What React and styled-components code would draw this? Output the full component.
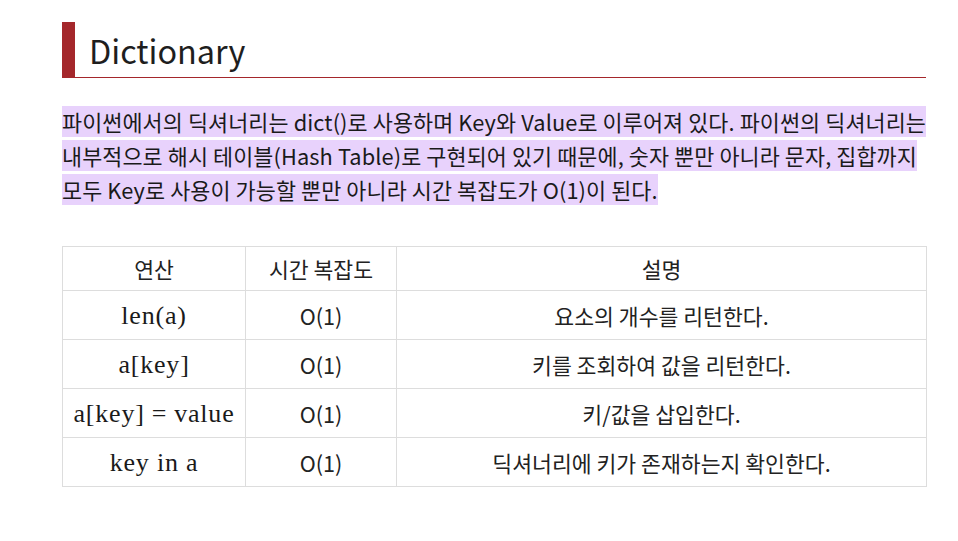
import React from 'react'
import styled, { createGlobalStyle } from 'styled-components'

const GlobalStyle = createGlobalStyle`
	body {
		margin: 0;
		background: #fff;
		font-family: "Noto Sans CJK KR", "Noto Sans", sans-serif;
		color: #222;
	}
`

const Page = styled.div`
	width: 864px;
	padding: 22px 32px 40px 62px;
`

const Header = styled.div`
	height: 55px;
	border-left: 13px solid #a4272b;
	border-bottom: 1px solid #a4272b;
	padding-left: 14px;
	display: flex;
	align-items: center;
`

const Title = styled.h1`
	margin: 0;
	font-size: 32.4px;
	font-weight: 400;
	color: #1e1e1e;
	line-height: 1;
	padding-top: 2px;
`

const Paragraph = styled.p`
	margin: 27px 0 0;
	font-size: 21.8px;
	letter-spacing: 0.1px;
	line-height: 34px;
	color: #1a1a1a;
	word-break: keep-all;
`

const Mark = styled.span`
	background: #e8d2fc;
`

const Table = styled.table`
	margin-top: 39px;
	width: 864px;
	border-collapse: collapse;
	table-layout: fixed;
	font-size: 21.6px;
	color: #222;
`

const HeadCell = styled.th`
	height: 43px;
	border: 1px solid #dddddd;
	font-weight: 400;
	text-align: center;
	vertical-align: middle;
	padding: 0;
	width: ${props => props.w}px;
`

const Cell = styled.td`
	height: 48px;
	border: 1px solid #dddddd;
	text-align: center;
	vertical-align: middle;
	padding: 0;
`

const Math = styled.span`
	font-family: "Liberation Serif", "DejaVu Serif", serif;
	font-size: 26px;
	letter-spacing: 0.8px;
	color: #1a1a1a;
`

const Rel = styled.span`
	margin: 0 7px;
`

const rows = [
	{ op: <Math>len(a)</Math>, desc: '요소의 개수를 리턴한다.' },
	{ op: <Math>a[key]</Math>, desc: '키를 조회하여 값을 리턴한다.' },
	{
		op: (
			<Math>
				a[key]<Rel>=</Rel>value
			</Math>
		),
		desc: '키/값을 삽입한다.'
	},
	{ op: <Math>key in a</Math>, desc: '딕셔너리에 키가 존재하는지 확인한다.' }
]

export default function App() {
	return (
		<Page>
			<GlobalStyle />
			<Header>
				<Title>Dictionary</Title>
			</Header>
			<Paragraph>
				<Mark>
					파이썬에서의 딕셔너리는 dict()로 사용하며 Key와 Value로 이루어져 있다. 파이썬의 딕셔너리는 내부적으로 해시
					테이블(Hash Table)로 구현되어 있기 때문에, 숫자 뿐만 아니라 문자, 집합까지 모두 Key로 사용이 가능할 뿐만
					아니라 시간 복잡도가 O(1)이 된다.
				</Mark>
			</Paragraph>
			<Table>
				<thead>
					<tr>
						<HeadCell w={182}>연산</HeadCell>
						<HeadCell w={150}>시간 복잡도</HeadCell>
						<HeadCell w={529}>설명</HeadCell>
					</tr>
				</thead>
				<tbody>
					{rows.map((r, i) => (
						<tr key={i}>
							<Cell>{r.op}</Cell>
							<Cell>O(1)</Cell>
							<Cell>{r.desc}</Cell>
						</tr>
					))}
				</tbody>
			</Table>
		</Page>
	)
}
